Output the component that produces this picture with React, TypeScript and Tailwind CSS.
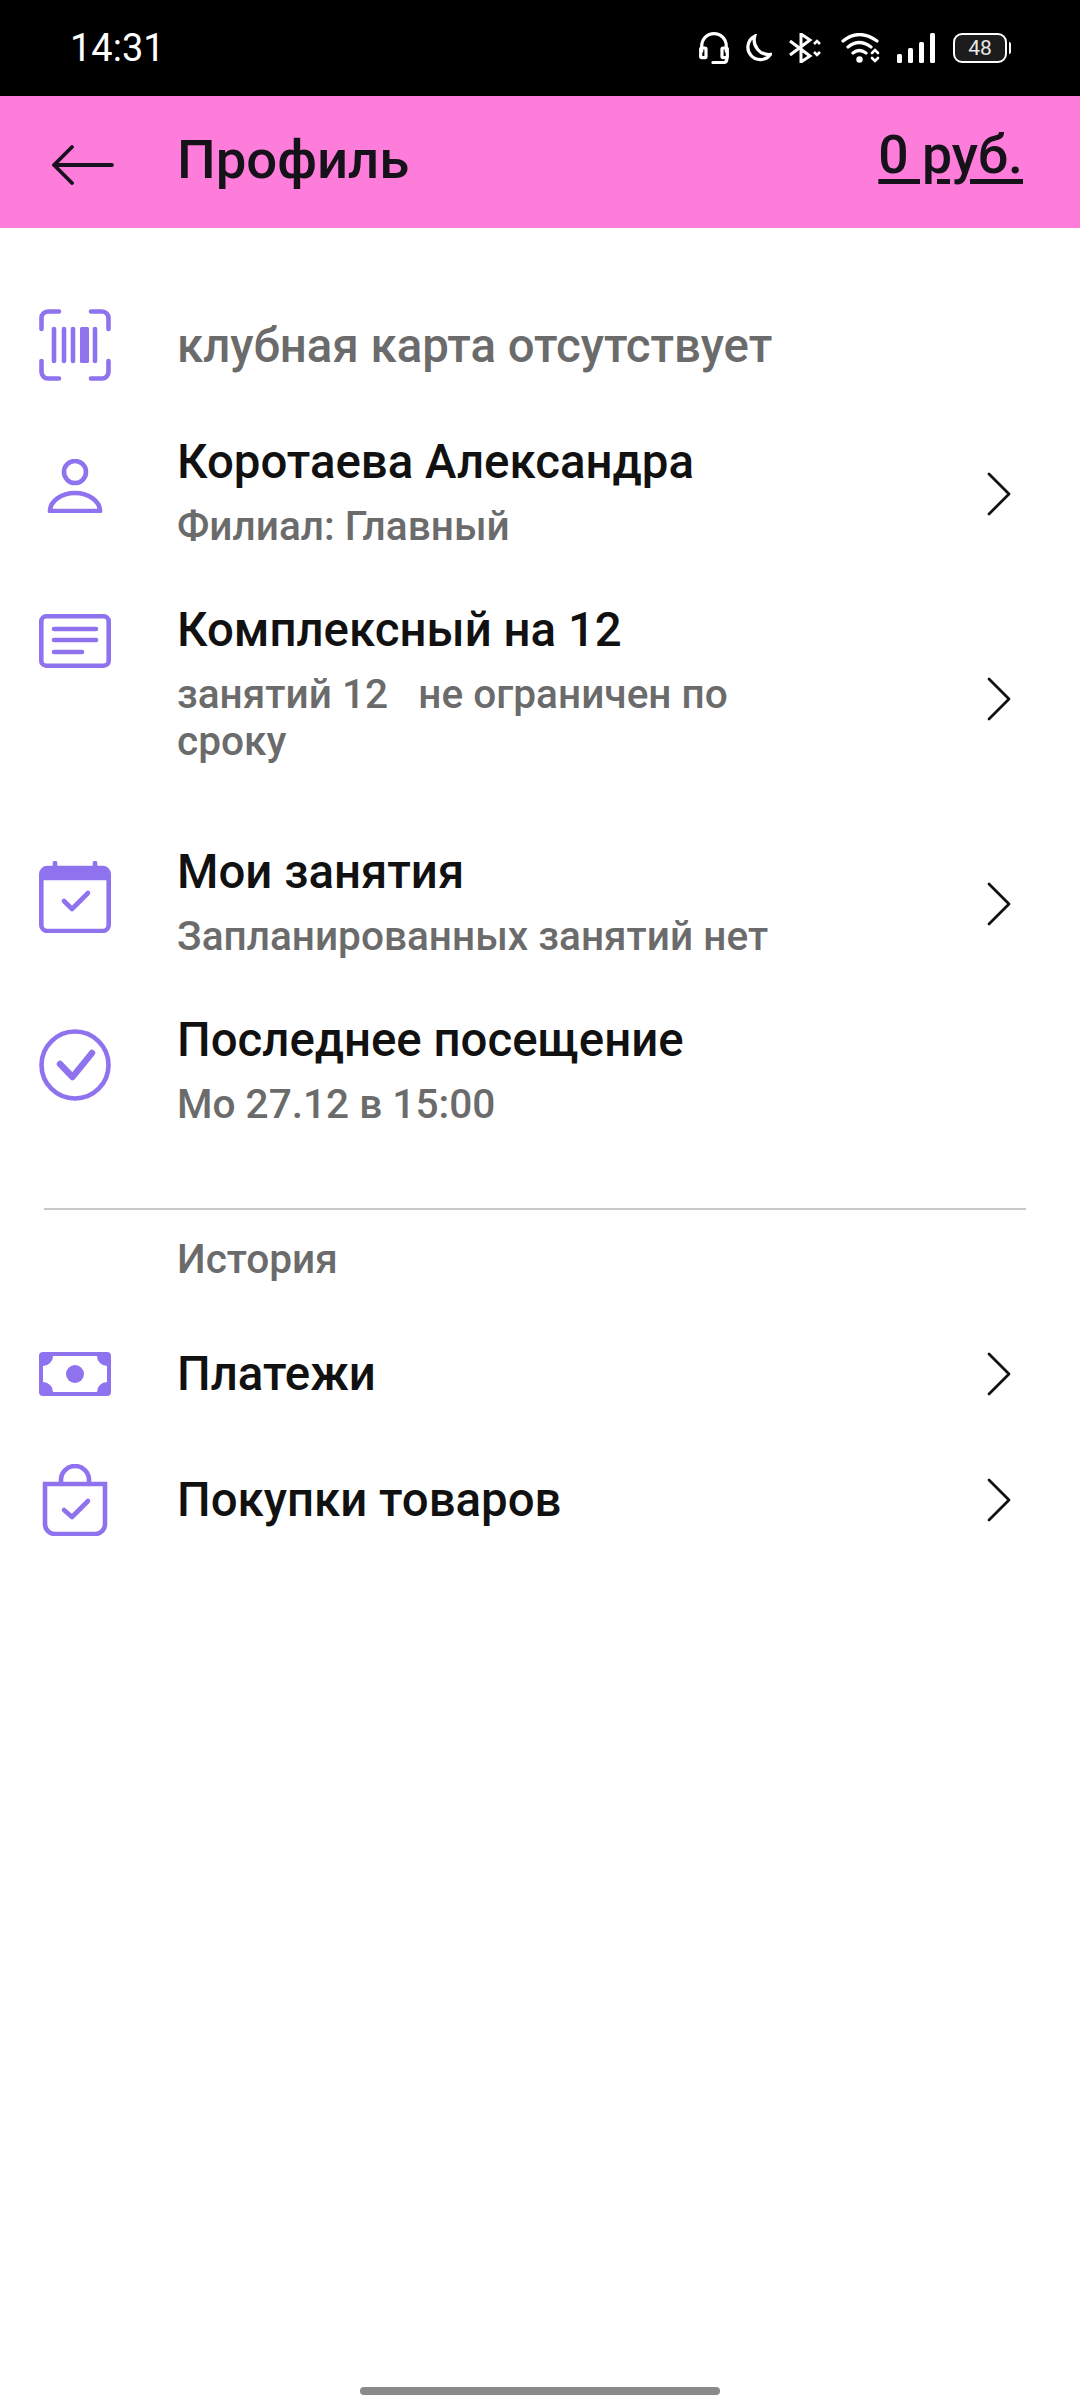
const font = "font-['Roboto',sans-serif]";

function Icon({ children, h = 72 }: { children: React.ReactNode; h?: number }) {
  return (
    <svg width="72" height={h} viewBox={`0 0 72 ${h}`} fill="none" stroke="#8f73ee" strokeWidth="4.6" strokeLinecap="round" strokeLinejoin="round" className="shrink-0 block">
      {children}
    </svg>
  );
}

function Chevron() {
  return (
    <svg width="26" height="44" viewBox="0 0 26 44" fill="none" stroke="#111" strokeWidth="2.8" strokeLinecap="round" strokeLinejoin="round" className="shrink-0">
      <path d="M3 2 L23 22 L3 42" />
    </svg>
  );
}

function Row({ icon, title, sub, chevron, className, iconTop }: { icon: React.ReactNode; title: string; sub?: string; chevron?: boolean; className: string; iconTop: string }) {
  return (
    <div className={`flex pl-[39px] pr-[68px] ${className}`}>
      <div className={`w-[72px] shrink-0 ${iconTop}`}>{icon}</div>
      <div className="ml-[66px] flex-1 min-w-0 pt-[4px]">
        <div className="text-[47.4px] leading-[54px] font-medium text-[#111]">{title}</div>
        {sub && <div className="mt-[14px] w-[620px] whitespace-pre-wrap text-[40.6px] leading-[47px] font-medium text-[#6b6b6b]">{sub}</div>}
      </div>
      {chevron && <div className="self-center flex"><Chevron /></div>}
    </div>
  );
}

export default function App() {
  return (
    <div className={`w-[1080px] h-[2400px] bg-white flex flex-col ${font}`}>
      <div className="h-[96px] shrink-0 bg-black flex items-center justify-between pl-[70px] pr-[69px] text-white">
        <span className="text-[38px] font-normal">14:31</span>
        <div className="flex items-center">
          <svg width="30" height="32" viewBox="0 0 28 30" fill="none" stroke="#fff" strokeWidth="3" strokeLinecap="round">
            <path d="M2.5 18V13a11.5 11.5 0 0 1 23 0v5" />
            <rect x="1.5" y="15" width="5" height="9" rx="1" />
            <rect x="21.5" y="15" width="5" height="9" rx="1" />
            <path d="M26 24v2a3 3 0 0 1-3 2.6H13" />
          </svg>
          <svg className="ml-[16px]" width="27" height="28" viewBox="0 0 25 26" fill="none" stroke="#fff" strokeWidth="3">
            <path d="M9 2a11.5 11.5 0 1 0 14.5 17A13.5 13.5 0 0 1 9 2z" />
          </svg>
          <svg className="ml-[17px]" width="32" height="30" viewBox="0 0 32 30" fill="none" stroke="#fff" strokeWidth="3">
            <path d="M1 8l20 15-9 6V1l9 6L1 22" />
            <path d="M25 11l3-3 3 3M25 19l3 3 3-3" strokeWidth="2.6" />
          </svg>
          <svg className="ml-[20px]" width="40" height="30" viewBox="0 0 40 30" fill="none" stroke="#fff" strokeWidth="3.2" strokeLinecap="round">
            <path d="M2 8q16-13 34 0M7 14q11-9 23 0M12 20q6-5 13 0" />
            <circle cx="18.5" cy="26.5" r="3.2" fill="#fff" stroke="none" />
            <path d="M31 20l3-3 3 3M31 25l3 3 3-3" strokeWidth="2.6" />
          </svg>
          <svg className="ml-[16px]" width="38" height="30" viewBox="0 0 38 30" fill="#fff">
            <rect x="0" y="21" width="5" height="9" rx="1.5" />
            <rect x="11" y="15" width="5" height="15" rx="1.5" />
            <rect x="22" y="9" width="5" height="21" rx="1.5" />
            <rect x="33" y="0" width="5" height="30" rx="1.5" />
          </svg>
          <div className="ml-[18px] flex items-center">
            <div className="w-[54px] h-[30px] rounded-[9px] border-[2.5px] border-white bg-[#1c1c1c] flex items-center justify-center text-[21px] leading-none text-[#e8e8e8]">48</div>
            <div className="ml-[2px] w-[2px] h-[12px] bg-white rounded-r-sm" />
          </div>
        </div>
      </div>

      <div className="h-[132px] shrink-0 bg-[#ff7dda] flex items-center pl-[52px] pr-[57px]">
        <svg width="62" height="40" viewBox="0 0 62 40" fill="none" stroke="#1a1020" strokeWidth="3.8" strokeLinecap="round" strokeLinejoin="round" className="mt-[6px]">
          <path d="M60 20H2M20 2L2 20l18 18" />
        </svg>
        <span className="ml-[63px] mb-[4px] text-[54.5px] font-medium text-[#16121a]">Профиль</span>
        <span className="ml-auto mb-[14px] text-[53.5px] font-medium text-[#16121a] underline decoration-[5px] underline-offset-[6px]">0 руб.</span>
      </div>

      <div className="flex items-center pl-[39px] mt-[81px]">
        <Icon>
          <path d="M2.5 20V9A6.5 6.5 0 0 1 9 2.5h11M52 2.5h11A6.5 6.5 0 0 1 69.5 9v11M2.5 52v11A6.5 6.5 0 0 0 9 69.5h11M69.5 52v11a6.5 6.5 0 0 1-6.5 6.5H52" />
          <path d="M15 20v32M25 20v32M34 20v32M56 20v32" />
          <rect x="41" y="18" width="9" height="36" rx="1.5" fill="#8f73ee" stroke="none" />
        </Icon>
        <span className="ml-[66px] mt-[1px] text-[47.4px] leading-[54px] font-medium text-[#6b6b6b]">клубная карта отсутствует</span>
      </div>

      <Row
        className="mt-[50px] h-[125px]"
        iconTop="mt-[28px]"
        chevron
        title="Коротаева Александра"
        sub="Филиал: Главный"
        icon={
          <Icon h={54}>
            <circle cx="36" cy="13" r="11" />
            <path d="M11 52a25 18 0 0 1 50 0z" />
          </Icon>
        }
      />
      <Row
        className="mt-[43px] h-[200px]"
        iconTop="mt-[15px]"
        chevron
        title="Комплексный на 12"
        sub="занятий 12   не ограничен по сроку"
        icon={
          <Icon h={54}>
            <rect x="2.3" y="2.3" width="67.4" height="49.4" rx="5" />
            <path d="M15 15h42M15 26h42M15 38h28" />
          </Icon>
        }
      />
      <Row
        className="mt-[42px] h-[126px]"
        iconTop="mt-[20px]"
        chevron
        title="Мои занятия"
        sub="Запланированных занятий нет"
        icon={
          <Icon>
            <path d="M16 2v5M56 2v5" />
            <rect x="2.3" y="7" width="67.4" height="63" rx="6" />
            <path d="M4 13a5 5 0 0 1 5-5h54a5 5 0 0 1 5 5v4H4z" fill="#8f73ee" />
            <path d="M25 40l8 8 16-16" />
          </Icon>
        }
      />
      <Row
        className="mt-[42px] h-[126px]"
        iconTop="mt-[20px]"
        title="Последнее посещение"
        sub="Мо 27.12 в 15:00"
        icon={
          <Icon>
            <circle cx="36" cy="36" r="33.5" />
            <path d="M21 35l12.5 13L53 24" strokeWidth="6.4" />
          </Icon>
        }
      />

      <div className="mt-[73px] ml-[44px] mr-[54px] h-[2px] bg-[#c9c9c9]" />
      <div className="mt-[26px] pl-[177px] text-[40.6px] leading-[46px] font-medium text-[#6b6b6b]">История</div>

      <div className="mt-[65px] flex items-center pl-[39px] pr-[68px]">
        <Icon h={44}>
          <rect x="0" y="0" width="72" height="44" rx="4" fill="#8f73ee" stroke="none" />
          <path d="M14 4h44a10 10 0 0 0 10 10v16a10 10 0 0 0-10 10H14a10 10 0 0 0-10-10V14A10 10 0 0 0 14 4z" fill="#fff" stroke="none" />
          <circle cx="36" cy="22" r="9" fill="#8f73ee" stroke="none" />
        </Icon>
        <span className="ml-[66px] flex-1 text-[47.4px] leading-[54px] font-medium text-[#111]">Платежи</span>
        <Chevron />
      </div>
      <div className="mt-[63px] flex items-center pl-[39px] pr-[68px]">
        <Icon>
          <path d="M6 20h60v40a10 10 0 0 1-10 10H16A10 10 0 0 1 6 60z" strokeLinecap="butt" strokeLinejoin="miter" />
          <path d="M22 20v-4a14 14 0 0 1 28 0v4" />
          <path d="M25 46l8 7 16-16" />
        </Icon>
        <span className="ml-[66px] flex-1 text-[47.4px] leading-[54px] font-medium text-[#111]">Покупки товаров</span>
        <Chevron />
      </div>

      <div className="mt-auto mb-[5px] mx-auto w-[360px] h-[8px] rounded-full bg-[#8a8a8a]" />
    </div>
  );
}
